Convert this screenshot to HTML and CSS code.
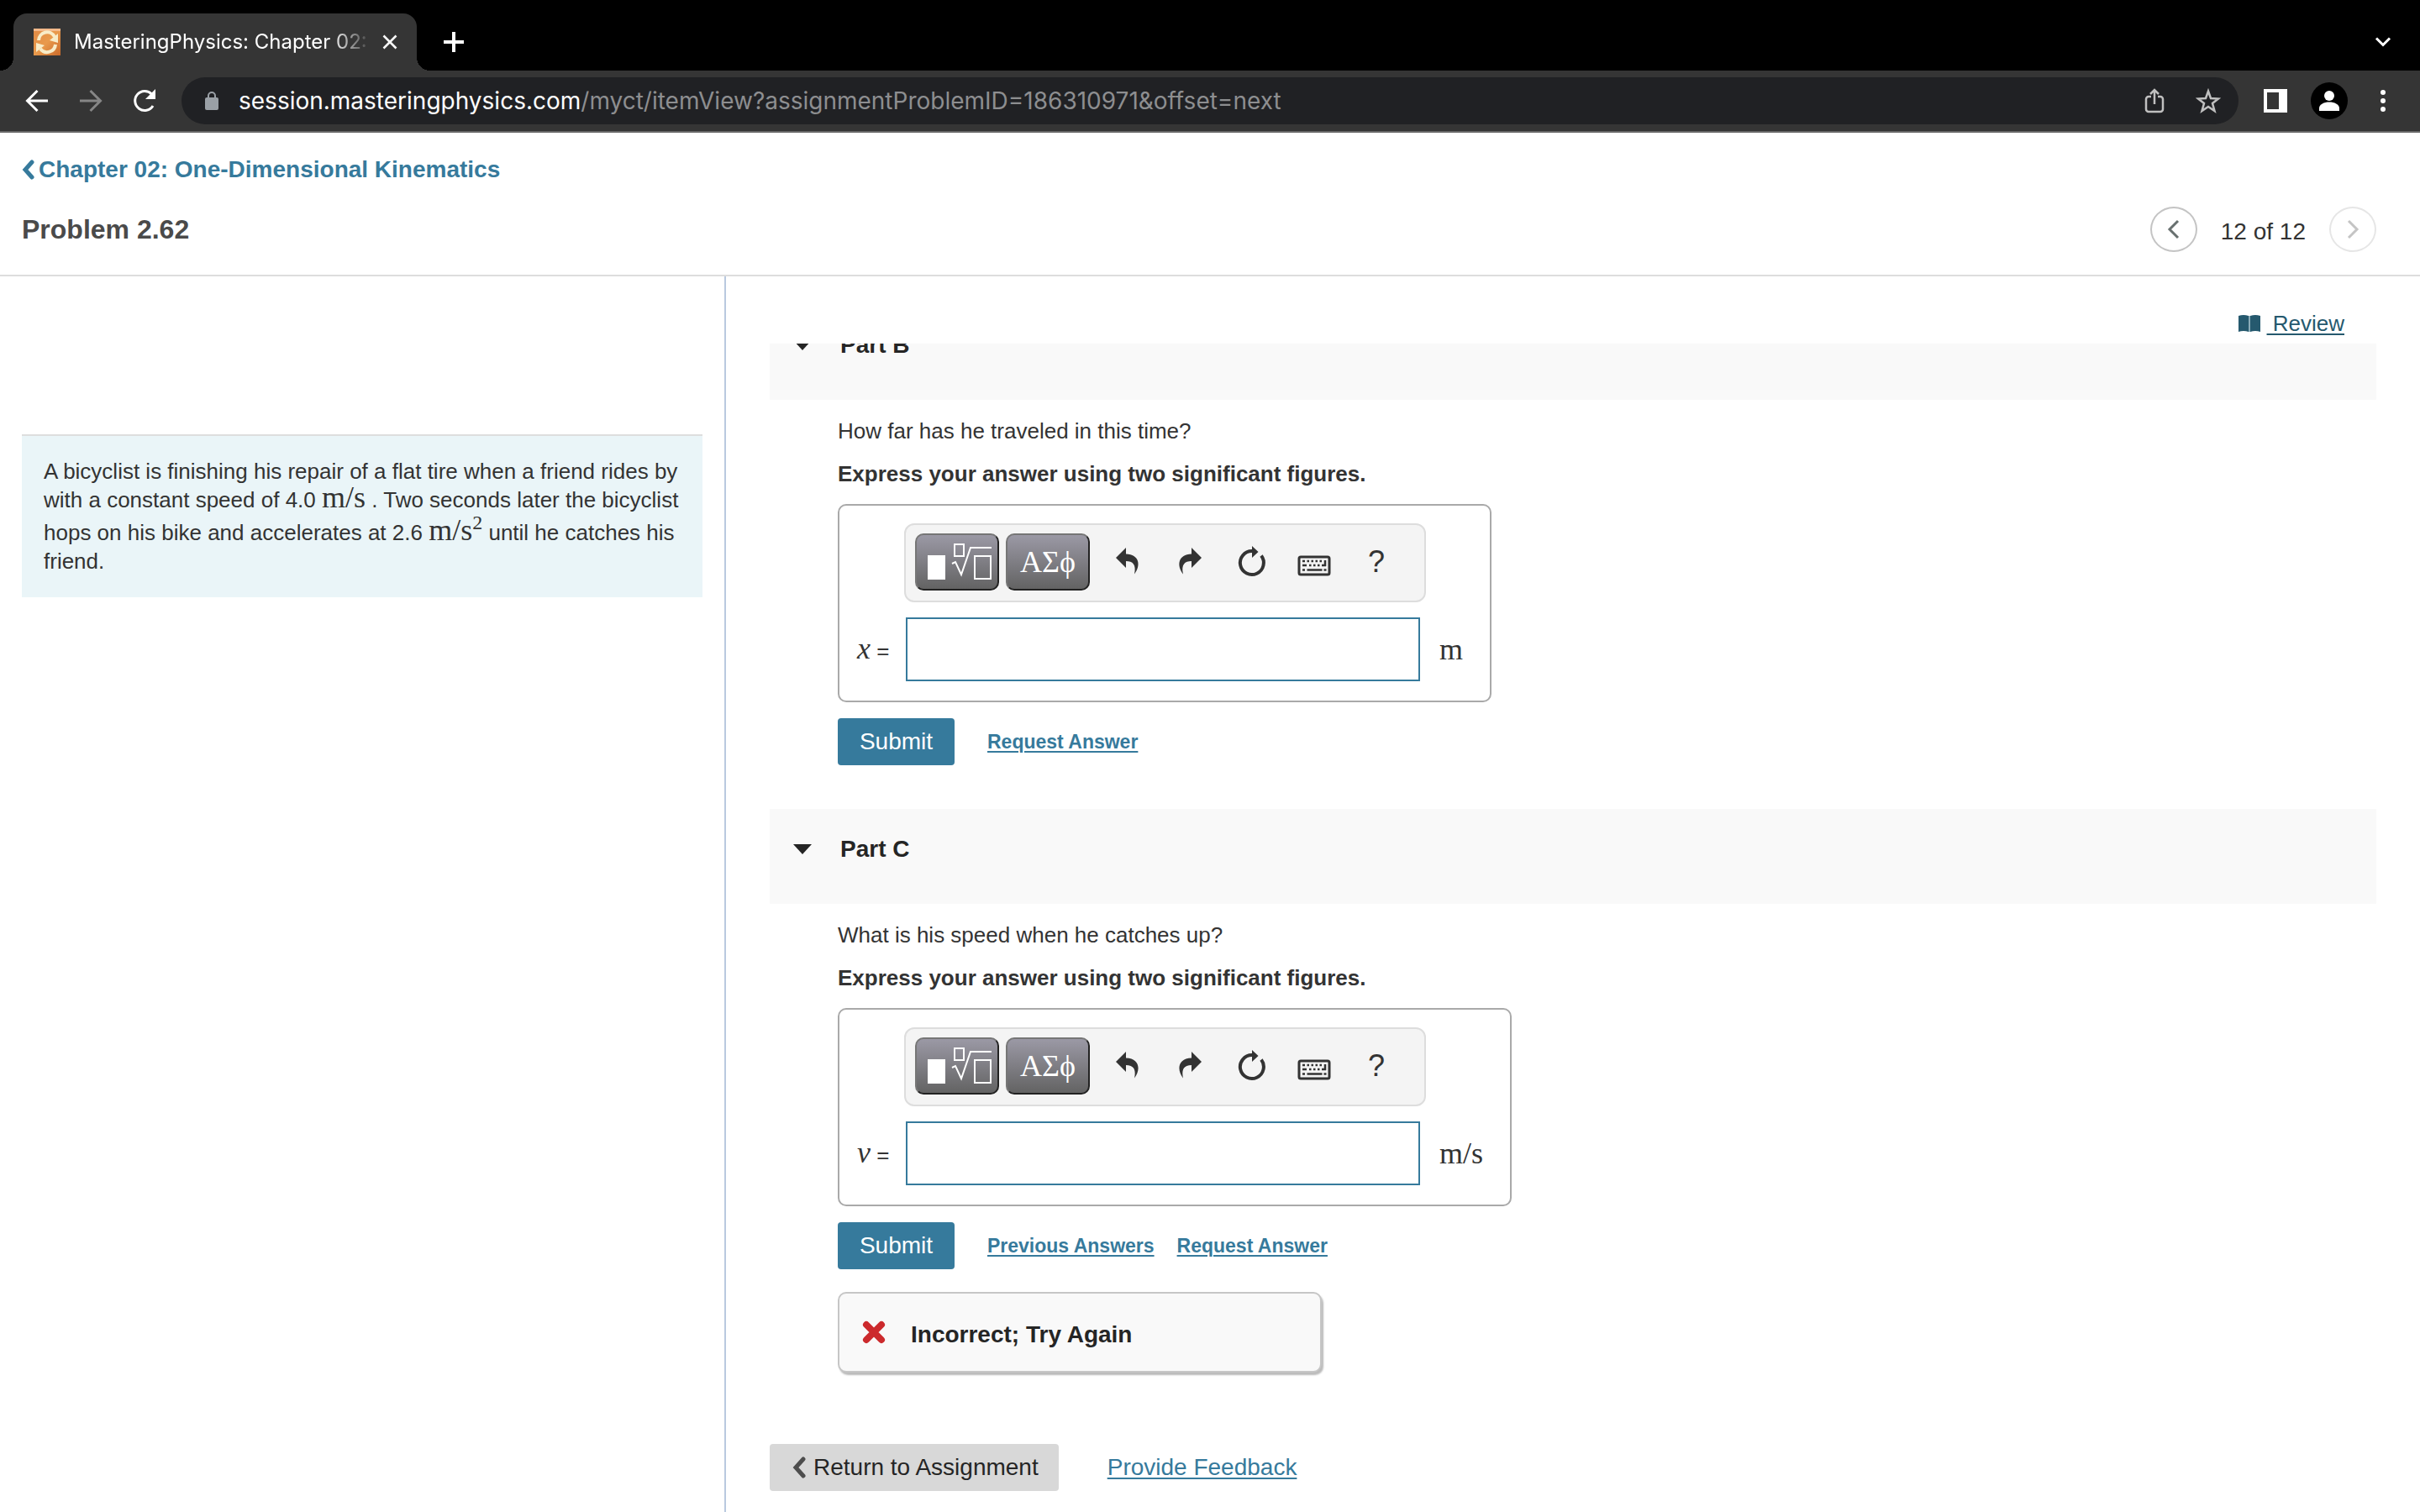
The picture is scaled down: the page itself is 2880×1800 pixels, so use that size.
FILE: index.html
```
<!DOCTYPE html>
<html lang="en">
<head>
  <meta charset="UTF-8">
  <title>MasteringPhysics: Chapter 02: One-Dimensional Kinematics</title>
  <link rel="stylesheet" href="styles.css">
</head>
<body>
  <!-- icons used more than once -->
  <svg class="sprite" aria-hidden="true">
    <symbol id="templates" viewBox="0 0 96 64">
      <path d="M13 24h21v29H13z" fill="#fff"/>
      <path d="M45 11h11v14H45zM69 25h19v27H69zM42 34l4-2 7 15L64 15h25" fill="none" stroke="#fff" stroke-width="2"/>
    </symbol>
    <symbol id="undo" viewBox="0 0 44 44">
      <path d="M20 5L8 17l12 12v-8c8 0 12.500 4 10 15.500C38 26 36 13 20 12.500z"/>
    </symbol>
    <symbol id="redo" viewBox="0 0 44 44">
      <path d="M24 5l12 12-12 12v-8c-8 0-12.500 4-10 15.500C6 26 8 13 24 12.500z"/>
    </symbol>
    <symbol id="reset" viewBox="0 0 44 44">
      <path d="M33 14.500A14 14 0 1 1 22 9" fill="none" stroke="currentColor" stroke-width="4"/>
      <path d="M22 3l7.500 7-7.500 7z"/>
    </symbol>
    <symbol id="keyboard" viewBox="0 0 44 44">
      <rect x="4" y="16" width="36" height="21" rx="2" fill="none" stroke="currentColor" stroke-width="3"/>
      <path d="M8 21h3M13.500 21h2.500M18.500 21h2.500M23.500 21h2.500M28.500 21h2.500M8 26h5M16 26h2.500M21 26h2.500M26 26h2.500M31 26h5M35 20v7M8 31.500h3M13.500 31.500h18M33.500 31.500h3" fill="none" stroke="currentColor" stroke-width="2.500"/>
    </symbol>
  </svg>

  <div class="browser">
    <div class="tabs">
      <div class="tab">
        <svg class="favicon" viewBox="0 0 32 32">
          <defs>
            <linearGradient id="orange" x1="0" y1="0" x2="1" y2="1">
              <stop offset="0" stop-color="#e08a45"/>
              <stop offset=".5" stop-color="#e99a4c"/>
              <stop offset="1" stop-color="#c96a2a"/>
            </linearGradient>
          </defs>
          <path d="M0 0h32v32H0z" fill="url(#orange)"/>
          <path d="M0 0h32v3H0z" fill="#f3b98a"/>
          <path d="M6 14A10 10 0 0 1 25 10M26 19A10 10 0 0 1 8 24" fill="none" stroke="#f8ecc8" stroke-width="4"/>
          <path d="M29 6v11l-10-3zM3 28V17l10 3z" fill="#f8ecc8"/>
        </svg>
        <span class="tab-title">MasteringPhysics: Chapter 02:</span>
        <button class="tab-close" aria-label="Close tab">
          <svg width="18" height="18" viewBox="0 0 18 18"><path d="M1.500 1.500l15 15M16.500 1.500l-15 15" stroke="#fff" stroke-width="2.500"/></svg>
        </button>
      </div>
      <button class="new-tab" aria-label="New tab">
        <svg width="24" height="24" viewBox="0 0 24 24"><path d="M12 0v24M0 12h24" stroke="#fff" stroke-width="4"/></svg>
      </button>
      <button class="tab-search" aria-label="Search tabs">
        <svg width="20" height="14" viewBox="0 0 20 14"><path d="M2 2.500l8 8 8-8" fill="none" stroke="#fff" stroke-width="3"/></svg>
      </button>
    </div>

    <div class="toolbar">
      <button class="nav-button" aria-label="Back">
        <svg width="28" height="28" viewBox="0 0 28 28"><path d="M27 14H3M14.500 2L2.500 14l12 12" fill="none" stroke="#fff" stroke-width="3"/></svg>
      </button>
      <button class="nav-button" aria-label="Forward">
        <svg width="28" height="28" viewBox="0 0 28 28"><path d="M1 14h24M13.500 2l12 12-12 12" fill="none" stroke="#868686" stroke-width="3"/></svg>
      </button>
      <button class="nav-button" aria-label="Reload">
        <svg width="28" height="28" viewBox="0 0 28 28"><path d="M24 20A11.500 11.500 0 1 1 22.500 6" fill="none" stroke="#fff" stroke-width="3"/><path d="M27 0v12H15z" fill="#fff"/></svg>
      </button>
      <div class="address">
        <svg width="16" height="22" viewBox="0 0 16 22"><path d="M4 9V5a4 4 0 0 1 8 0v4" fill="none" stroke="#9aa0a6" stroke-width="2"/><rect y="7" width="16" height="15" rx="2" fill="#9aa0a6"/></svg>
        <span class="url">session.masteringphysics.com<span class="url-path">/myct/itemView?assignmentProblemID=186310971&amp;offset=next</span></span>
        <button aria-label="Share">
          <svg width="24" height="30" viewBox="0 0 24 30"><path d="M8 10H5a3 3 0 0 0-3 3v12a3 3 0 0 0 3 3h14a3 3 0 0 0 3-3V13a3 3 0 0 0-3-3h-3M12 19V3M7 7l5-5 5 5" fill="none" stroke="#c0c0c0" stroke-width="2.500"/></svg>
        </button>
        <button aria-label="Bookmark">
          <svg width="30" height="30" viewBox="0 0 30 30"><path d="M15 3.500l3 8.500 9 .5-7 5.500 2.500 9-7.500-5-7.500 5 2.500-9-7-5.500 9-.5z" fill="none" stroke="#c0c0c0" stroke-width="2.500"/></svg>
        </button>
      </div>
      <button class="side-panel" aria-label="Side panel">
        <svg width="28" height="28" viewBox="0 0 28 28"><path d="M0 0h28v28H0zM4 4v20h14V4z" fill="#fff" fill-rule="evenodd"/></svg>
      </button>
      <button class="profile" aria-label="Profile">
        <svg width="44" height="44" viewBox="0 0 44 44"><circle cx="22" cy="22" r="22"/><circle cx="22" cy="16" r="6" fill="#fff"/><path d="M10 34v-3c0-5 6-7.500 12-7.500S34 26 34 31v3z" fill="#fff"/></svg>
      </button>
      <button class="menu" aria-label="Menu">
        <svg width="8" height="28" viewBox="0 0 8 28"><g fill="#fff"><circle cx="4" cy="4" r="3"/><circle cx="4" cy="14" r="3"/><circle cx="4" cy="24" r="3"/></g></svg>
      </button>
    </div>
  </div>

  <header class="page-header">
    <a class="chapter-link" href="#">
      <svg width="16" height="24" viewBox="0 0 16 24"><path d="M12 3L4 12l8 9" fill="none" stroke="currentColor" stroke-width="5" stroke-linecap="round"/></svg>
      Chapter 02: One-Dimensional Kinematics
    </a>
    <div class="title-row">
      <h1>Problem 2.62</h1>
      <nav class="pager">
        <button aria-label="Previous item">
          <svg width="16" height="26" viewBox="0 0 16 26"><path d="M13 3L3 13l10 10" fill="none" stroke="#68706f" stroke-width="3"/></svg>
        </button>
        <span>12 of 12</span>
        <button aria-label="Next item" disabled>
          <svg width="16" height="26" viewBox="0 0 16 26"><path d="M3 3l10 10L3 23" fill="none" stroke="#c4c4c4" stroke-width="3"/></svg>
        </button>
      </nav>
    </div>
  </header>

  <main class="content">
    <aside class="problem">
      <p class="intro">A bicyclist is finishing his repair of a flat tire when a friend rides by with a constant speed of 4.0 <span class="math">m/s</span> . Two seconds later the bicyclist hops on his bike and accelerates at 2.6 <span class="math">m/s<sup>2</sup></span> until he catches his friend.</p>
    </aside>

    <div class="parts">
      <div class="review">
        <svg width="26" height="24" viewBox="0 0 26 24"><path d="M0 3q6-2 12 0v19q-6-2-12 0zM14 3q6-2 12 0v19q-6-2-12 0z" fill="#25596e"/><path d="M12 3h2v19h-2z" fill="#8badb9"/></svg>
        <a href="#">&nbsp;Review</a>
      </div>

      <div class="scroller">
        <section class="part scrolled">
          <h2><span class="arrow"></span>Part B</h2>
          <div class="part-body">
            <p>How far has he traveled in this time?</p>
            <p class="instructions">Express your answer using two significant figures.</p>
            <div class="answer">
              <div class="answer-tools">
                <button class="palette" aria-label="Templates"><svg width="96" height="64"><use href="#templates"/></svg></button>
                <button class="palette">ΑΣϕ</button>
                <div class="tools">
                  <button aria-label="Undo"><svg width="44" height="44"><use href="#undo"/></svg></button>
                  <button aria-label="Redo"><svg width="44" height="44"><use href="#redo"/></svg></button>
                  <button aria-label="Reset"><svg width="44" height="44"><use href="#reset"/></svg></button>
                  <button aria-label="Keyboard shortcuts"><svg width="44" height="44"><use href="#keyboard"/></svg></button>
                  <button>?</button>
                </div>
              </div>
              <label for="answer-b"><i>x</i> =</label>
              <input type="text" id="answer-b">
              <span class="unit">m</span>
            </div>
            <div class="actions">
              <button class="submit">Submit</button>
              <a href="#">Request Answer</a>
            </div>
          </div>
        </section>

        <section class="part">
          <h2><span class="arrow"></span>Part C</h2>
          <div class="part-body">
            <p>What is his speed when he catches up?</p>
            <p class="instructions">Express your answer using two significant figures.</p>
            <div class="answer">
              <div class="answer-tools">
                <button class="palette" aria-label="Templates"><svg width="96" height="64"><use href="#templates"/></svg></button>
                <button class="palette">ΑΣϕ</button>
                <div class="tools">
                  <button aria-label="Undo"><svg width="44" height="44"><use href="#undo"/></svg></button>
                  <button aria-label="Redo"><svg width="44" height="44"><use href="#redo"/></svg></button>
                  <button aria-label="Reset"><svg width="44" height="44"><use href="#reset"/></svg></button>
                  <button aria-label="Keyboard shortcuts"><svg width="44" height="44"><use href="#keyboard"/></svg></button>
                  <button>?</button>
                </div>
              </div>
              <label for="answer-c"><i>v</i> =</label>
              <input type="text" id="answer-c">
              <span class="unit">m/s</span>
            </div>
            <div class="actions">
              <button class="submit">Submit</button>
              <a href="#">Previous Answers</a>
              <a href="#">Request Answer</a>
            </div>
            <div class="feedback">
              <svg width="28" height="28" viewBox="0 0 28 28"><path d="M5 5l18 18M23 5L5 23" stroke="#cc2a2d" stroke-width="8" stroke-linecap="round"/></svg>
              <span>Incorrect; Try Again</span>
            </div>
          </div>
        </section>

        <div class="page-footer">
          <button class="return">
            <svg width="18" height="26" viewBox="0 0 18 26"><path d="M14 3L5 13l9 10" fill="none" stroke="#4d4d4d" stroke-width="5" stroke-linecap="round"/></svg>
            Return to Assignment
          </button>
          <a href="#">Provide Feedback</a>
        </div>
      </div>
    </div>
  </main>
</body>
</html>
```
FILE: styles.css
```
* {
  box-sizing: border-box;
}

body {
  margin: 0;
  height: 100vh;
  display: flex;
  flex-direction: column;
  overflow: hidden;
  font-family: "Liberation Sans", Arial, sans-serif;
  font-size: 26px;
  line-height: 34px;
  color: #333;
  background: #fff;
}

h1,
h2,
p {
  margin: 0;
}

button {
  margin: 0;
  padding: 0;
  border: none;
  background: none;
  font-family: inherit;
  color: inherit;
  cursor: pointer;
}

svg {
  display: block;
  flex: none;
}

a {
  color: #367a9c;
  text-decoration-thickness: 2px;
  text-underline-offset: 3px;
}

.sprite {
  position: absolute;
  width: 0;
  height: 0;
}

/* browser chrome */
.browser {
  flex: none;
  font-family: Inter, sans-serif;
  color: #fff;
  border-bottom: 2px solid #686868;
}

.tabs {
  display: flex;
  align-items: center;
  height: 84px;
  padding: 16px 34px 0 16px;
  background: #000;
}

.tab {
  position: relative;
  display: flex;
  align-items: center;
  width: 480px;
  height: 68px;
  padding: 0 23px 0 24px;
  border-radius: 16px 16px 0 0;
  background: #353535;
}

.tab::before,
.tab::after {
  content: "";
  position: absolute;
  bottom: 0;
  width: 16px;
  height: 16px;
}

.tab::before {
  right: 100%;
  background: radial-gradient(circle at 0 0, #000 16px, #353535 16px);
}

.tab::after {
  left: 100%;
  background: radial-gradient(circle at 100% 0, #000 16px, #353535 16px);
}

.favicon {
  width: 32px;
  height: 32px;
}

.tab-title {
  flex: 1;
  margin: 0 12px 0 16px;
  overflow: hidden;
  white-space: nowrap;
  font-size: 24px;
  mask-image: linear-gradient(to right, #000 86%, transparent);
}

.new-tab {
  margin-left: 32px;
}

.tab-search {
  margin-left: auto;
}

.toolbar {
  display: flex;
  align-items: center;
  height: 72px;
  padding: 0 40px 0 30px;
  background: #353535;
}

.nav-button {
  width: 28px;
  margin-right: 36px;
}

.address {
  flex: 1;
  display: flex;
  align-items: center;
  height: 56px;
  margin-left: -6px;
  padding: 0 21px 0 28px;
  border-radius: 28px;
  background: #202124;
}

.url {
  flex: 1;
  margin-left: 24px;
  font-size: 28px;
}

.url-path {
  color: #8d8e90;
}

.address button {
  margin-left: 37px;
}

.side-panel {
  margin-left: 30px;
}

.profile {
  margin: 0 38px 0 28px;
}

/* page header */
.page-header {
  flex: none;
  padding: 28px 52px 27px 26px;
  border-bottom: 2px solid #ddd;
}

.chapter-link {
  display: inline-flex;
  align-items: center;
  gap: 4px;
  font-size: 28px;
  line-height: 32px;
  font-weight: bold;
  text-decoration: none;
}

.title-row {
  display: flex;
  align-items: center;
  justify-content: space-between;
  margin-top: 24px;
}

h1 {
  font-size: 32px;
  line-height: 40px;
  color: #4a4a4a;
}

.pager {
  display: flex;
  align-items: center;
  gap: 28px;
  font-size: 28px;
}

.pager span {
  padding-top: 6px;
}

.pager button {
  display: flex;
  align-items: center;
  justify-content: center;
  width: 56px;
  height: 54px;
  border: 2px solid #c4c4c4;
  border-radius: 50%;
}

.pager button:disabled {
  border-color: #e6e6e6;
}

/* problem text */
.content {
  flex: 1;
  display: flex;
  min-height: 0;
}

.problem {
  width: 30%;
  padding: 188px 26px 0;
  border-right: 2px solid #b9c9df;
}

.intro {
  padding: 25px 20px 26px 26px;
  border-top: 2px solid #dedede;
  background: #eaf5f8;
}

.math,
.unit {
  font-family: "Liberation Serif", serif;
  font-size: 36px;
  line-height: 24px;
}

.math sup {
  font-size: 24px;
  line-height: 20px;
}

/* parts */
.parts {
  flex: 1;
  display: flex;
  flex-direction: column;
  min-width: 0;
  padding: 0 52px;
}

.review {
  flex: none;
  display: flex;
  align-items: center;
  justify-content: flex-end;
  gap: 8px;
  height: 80px;
  padding: 32px 38px 0 0;
}

.review a {
  color: #25596e;
}

.scroller {
  flex: 1;
  min-height: 0;
  overflow: hidden;
}

.scrolled {
  margin-top: -46px;
}

.part h2 {
  display: flex;
  align-items: center;
  height: 113px;
  padding: 0 28px 18px;
  font-size: 28px;
  color: #252525;
  background: #f9f9f9;
}

.arrow {
  margin-right: 34px;
  border: 11px solid transparent;
  border-top: 12px solid #252525;
  border-bottom: none;
}

.part-body {
  padding: 20px 0 52px 81px;
}

.instructions {
  margin: 17px 0 19px;
  font-weight: bold;
}

.answer {
  display: grid;
  grid-template-columns: 56px auto auto;
  align-items: center;
  row-gap: 18px;
  width: fit-content;
  padding: 21px 32px 23px 21px;
  border: 2px solid #a9a9a9;
  border-radius: 10px;
}

.answer-tools {
  grid-column: 2;
  display: flex;
  height: 94px;
  padding: 10px 20px 0 11px;
  border: 2px solid #ddd;
  border-radius: 12px;
  background: #f4f4f4;
}

.palette {
  width: 100px;
  height: 68px;
  margin-right: 8px;
  border: 2px solid;
  border-color: #767676 #222 #222 #767676;
  border-radius: 10px;
  background: linear-gradient(#9b99a5, #636363);
  font-family: "Liberation Serif", serif;
  font-size: 36px;
  color: #fff;
}

.tools {
  display: flex;
}

.tools button {
  display: flex;
  align-items: center;
  justify-content: center;
  width: 74px;
  height: 68px;
  font-size: 36px;
}

.tools svg {
  fill: currentColor;
}

.answer label {
  grid-column: 1;
}

.answer label i {
  font-family: "Liberation Serif", serif;
  font-size: 36px;
}

.answer input {
  width: 612px;
  height: 76px;
  margin-left: 2px;
  padding: 0 12px;
  border: 2px solid #367a9c;
  background: #fff;
  font: inherit;
}

.unit {
  margin-left: 16px;
}

.actions {
  display: flex;
  align-items: center;
  gap: 27px;
  margin-top: 19px;
  font-size: 23px;
  font-weight: bold;
}

.submit {
  width: 139px;
  height: 56px;
  margin-right: 12px;
  border-radius: 4px;
  background: #367a9c;
  font-size: 28px;
  color: #fff;
}

.feedback {
  display: flex;
  align-items: center;
  gap: 30px;
  width: 576px;
  height: 96px;
  margin-top: 27px;
  padding-left: 27px;
  border: 2px solid #c6c6c6;
  border-radius: 10px;
  box-shadow: 2px 3px 2px #bbb;
  background: #f9f9f9;
  font-size: 28px;
  font-weight: bold;
  color: #252525;
}

.feedback span {
  padding-top: 6px;
}

.page-footer {
  display: flex;
  align-items: center;
  gap: 58px;
  padding-top: 33px;
  font-size: 28px;
}

.return {
  display: flex;
  align-items: center;
  gap: 8px;
  height: 56px;
  padding: 0 24px 0 26px;
  border-radius: 4px;
  background: #d8d8d8;
  font-size: 28px;
  color: #252525;
}
```
